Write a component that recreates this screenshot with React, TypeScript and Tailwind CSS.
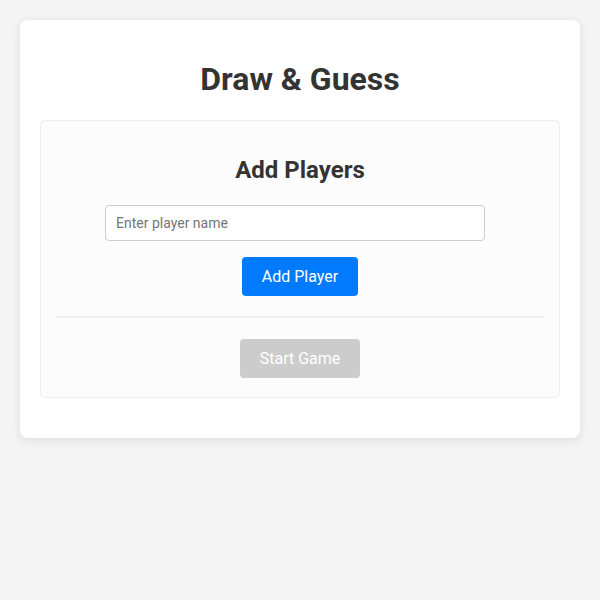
import { useState } from 'react';

export default function App() {
  const [name, setName] = useState('');
  const [players, setPlayers] = useState<string[]>([]);

  function addPlayer() {
    const n = name.trim();
    if (!n) return;
    setPlayers([...players, n]);
    setName('');
  }

  return (
    <div className="min-h-screen bg-[#f4f4f4] p-5 font-['Roboto',sans-serif] text-[#333]">
      <div className="bg-white rounded-lg shadow-[0_2px_10px_rgba(0,0,0,0.1)] px-5 pt-5 pb-10">
        <h1 className="text-[32px] leading-[37.5px] font-bold text-center my-[21.44px]">
          Draw &amp; Guess
        </h1>

        {/* Player setup */}
        <div className="bg-[#fcfcfc] border border-[#eee] rounded-[5px] px-[15px] pt-[15px] pb-[19px]">
          <h2 className="text-2xl leading-[28px] font-bold text-center mt-[20px] mb-[21px]">
            Add Players
          </h2>
          <div className="flex flex-col items-center">
            <input
              value={name}
              onChange={(e) => setName(e.target.value)}
              placeholder="Enter player name"
              className="w-[380px] h-[36px] mr-[10px] px-[10px] border border-[#ccc] rounded bg-white text-sm placeholder:text-[#757575] outline-none"
            />
            <button
              onClick={addPlayer}
              className="mt-4 h-[39px] px-5 rounded bg-[#007bff] text-white text-base"
            >
              Add Player
            </button>
          </div>
          {players.length > 0 && (
            <ul className="mt-3 text-center text-sm">
              {players.map((p, i) => (
                <li key={i}>{p}</li>
              ))}
            </ul>
          )}
          <div className="mt-5 mb-[21px] h-[2px] bg-[#eee]" />
          <div className="flex justify-center">
            <button
              disabled={players.length < 2}
              className="h-[39px] w-[120px] rounded bg-[#ccc] text-white text-base"
            >
              Start Game
            </button>
          </div>
        </div>
      </div>
    </div>
  );
}
